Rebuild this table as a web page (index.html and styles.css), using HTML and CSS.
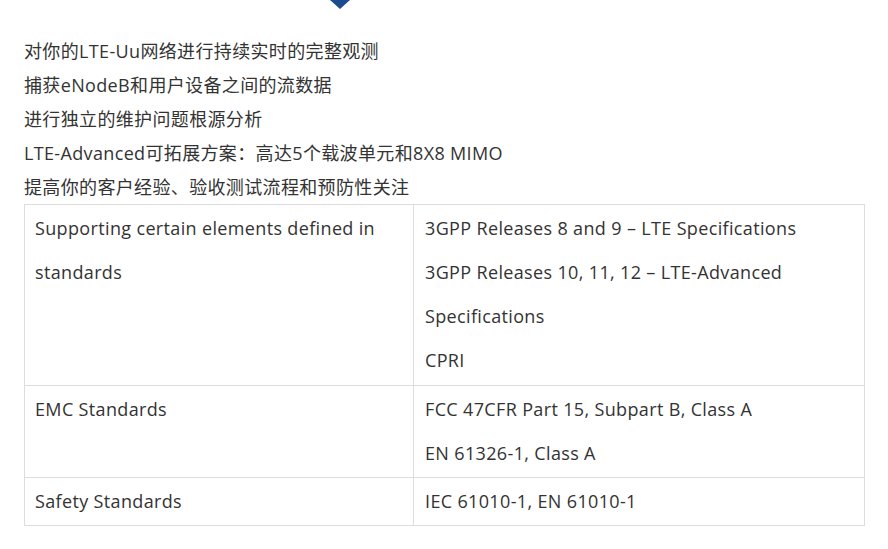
FILE: index.html
```html
<!DOCTYPE html>
<html lang="zh-CN">
<head>
	<meta charset="UTF-8">
	<title>LTE-Uu</title>
	<link rel="stylesheet" href="styles.css">
</head>
<body>
	<div class="wrap">
		<div class="pointer">
			<svg width="20" height="9" viewBox="0 0 20 9"><polygon points="0,0 20,0 10,9" fill="#1d4c8e"/></svg>
		</div>
		<ul class="feature">
			<li>对你的LTE-Uu网络进行持续实时的完整观测</li>
			<li>捕获eNodeB和用户设备之间的流数据</li>
			<li>进行独立的维护问题根源分析</li>
			<li>LTE-Advanced可拓展方案：高达5个载波单元和8X8 MIMO</li>
			<li>提高你的客户经验、验收测试流程和预防性关注</li>
		</ul>
		<table class="spec">
			<colgroup>
				<col class="c1">
				<col>
			</colgroup>
			<tr class="first">
				<td><p>Supporting certain elements defined in standards</p></td>
				<td>
					<p>3GPP Releases 8 and 9 – LTE Specifications</p>
					<p>3GPP Releases 10, 11, 12 – LTE-Advanced Specifications</p>
					<p>CPRI</p>
				</td>
			</tr>
			<tr>
				<td><p>EMC Standards</p></td>
				<td>
					<p>FCC 47CFR Part 15, Subpart B, Class A</p>
					<p>EN 61326-1, Class A</p>
				</td>
			</tr>
			<tr>
				<td><p>Safety Standards</p></td>
				<td><p>IEC 61010-1, EN 61010-1</p></td>
			</tr>
		</table>
	</div>
</body>
</html>
```

FILE: styles.css
```css
*{ margin:0; padding:0; list-style:none;}
body{ background:#fff; color:#333; font-family:"Open Sans","Noto Sans CJK SC",sans-serif; font-size:18px; letter-spacing:0.35px;}
.wrap{ width:841px; padding-left:24px;}
.pointer{ height:34px; padding-left:306px;}
.pointer svg{ display:block;}
.feature li{ height:34px; line-height:34px; white-space:nowrap;}
.spec{ width:841px; border-collapse:collapse; table-layout:fixed;}
.spec .c1{ width:389px;}
.spec td{ border:1px solid #ddd; vertical-align:top; padding:1px 10px 2px; line-height:44px;}
.spec td + td{ padding-left:11px;}
.spec .first td{ padding-bottom:3px;}
```
